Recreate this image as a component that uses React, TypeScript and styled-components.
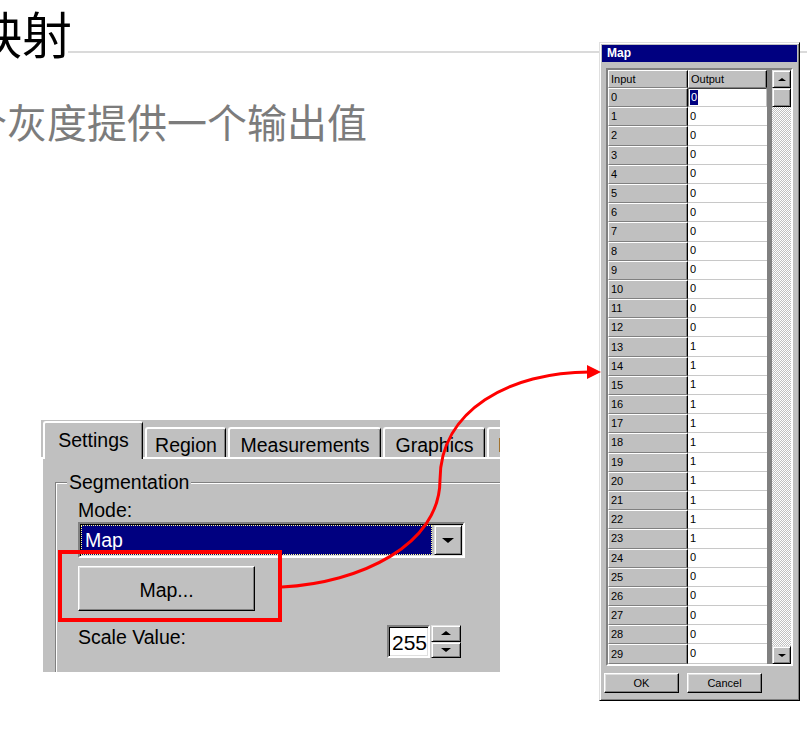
import React from "react";
import styled, { createGlobalStyle } from "styled-components";

const GlobalStyle = createGlobalStyle`
  html, body { margin: 0; padding: 0; background: #fff; }
  body { font-family: "Liberation Sans", Arial, sans-serif; }
  * { box-sizing: border-box; }
`;

const Page = styled.div`
  position: relative;
  width: 807px;
  height: 729px;
  overflow: hidden;
  background: #fff;
  display: grid;
  grid-template-columns: 599px 202px 1fr;
  grid-template-rows: auto auto 1fr;
`;

const Heading = styled.header`
  grid-column: 1 / -1;
  grid-row: 1;
  display: flex;
  align-items: flex-start;
  height: 64px;
`;

const Title = styled.h1`
  margin: 7px 0 0 -28px;
  font: 400 50px/50px "Noto Sans CJK SC", sans-serif;
  color: #000;
  white-space: nowrap;
`;

const Rule = styled.div`
  flex: 1;
  height: 2px;
  margin: 51px 0 0 -4px;
  background: #dadada;
`;

const Subtitle = styled.p`
  grid-column: 1;
  grid-row: 2;
  margin: 37px 0 0 -33px;
  font: 400 40px/40px "Noto Sans CJK SC", sans-serif;
  color: #7c7c7c;
  white-space: nowrap;
`;

/* ---------- left property panel ---------- */

const Panel = styled.section`
  grid-column: 1;
  grid-row: 3;
  align-self: start;
  margin: 279px 0 0 41px;
  width: 459px;
  height: 252px;
  background: #c0c0c0;
  overflow: hidden;
  display: flex;
  flex-direction: column;
  font: 19.5px/20px "Liberation Sans", Arial, sans-serif;
  color: #000;
`;

const TabStrip = styled.div`
  flex: none;
  display: flex;
  align-items: flex-end;
  gap: 2px;
  height: 37px;
  padding-left: 2px;
`;

const Tab = styled.div<{ $w: number; $selected?: boolean }>`
  flex: none;
  position: relative;
  z-index: ${(p) => (p.$selected ? 1 : 0)};
  width: ${(p) => p.$w}px;
  height: ${(p) => (p.$selected ? 38 : 30)}px;
  margin-bottom: ${(p) => (p.$selected ? -2 : 0)}px;
  padding-top: ${(p) => (p.$selected ? 7 : 6)}px;
  background: #c0c0c0;
  border-top: 2px solid #fff;
  border-left: 2px solid #fff;
  border-right: 1px solid #000;
  box-shadow: inset -1px 0 0 #808080;
  border-radius: 3px 3px 0 0;
  text-align: center;
  white-space: nowrap;
  overflow: hidden;
`;

const TabBody = styled.div`
  flex: 1;
  border-top: 2px solid #fff;
  border-left: 2px solid #fff;
  padding: 23px 0 0 12px;
`;

const GroupBox = styled.div`
  width: 600px;
  height: 300px;
  border-top: 1px solid #808080;
  border-left: 1px solid #808080;
  box-shadow: inset 1px 1px 0 #fff;
  padding-left: 22px;
  display: flex;
  flex-direction: column;
  align-items: flex-start;
`;

const Legend = styled.div`
  margin: -11px 0 0 -11px;
  padding: 0 2px;
  background: #c0c0c0;
`;

const FieldLabel = styled.div<{ $mt: number }>`
  margin-top: ${(p) => p.$mt}px;
`;

const Combo = styled.div`
  margin-top: 2px;
  width: 387px;
  height: 36px;
  border: 2px solid;
  border-color: #808080 #fff #fff #808080;
  box-shadow: inset 1px 1px 0 #000, inset -1px -1px 0 #dfdfdf;
  padding: 1px;
  display: flex;
  gap: 2px;
`;

const ComboField = styled.div`
  flex: 1;
  display: flex;
  align-items: center;
  padding-left: 4px;
  background: #000080;
  color: #fff;
  outline: 1px dotted #ffff90;
  outline-offset: -1px;
`;

const Raised = styled.div`
  background: #c0c0c0;
  border: 1px solid;
  border-color: #dfdfdf #000 #000 #dfdfdf;
  box-shadow: inset 1px 1px 0 #fff, inset -1px -1px 0 #808080;
  display: flex;
  align-items: center;
  justify-content: center;
`;

const DropButton = styled(Raised)`
  width: 28px;
`;

const Arrow = styled.span<{ $up?: boolean; $size: number }>`
  width: 0;
  height: 0;
  border-left: ${(p) => p.$size}px solid transparent;
  border-right: ${(p) => p.$size}px solid transparent;
  ${(p) =>
    p.$up
      ? `border-bottom: ${Math.ceil(p.$size * 0.7)}px solid #000;`
      : `border-top: ${Math.ceil(p.$size * 0.7)}px solid #000;`}
`;

const BigButton = styled.div`
  margin-top: 8px;
  width: 177px;
  height: 45px;
  padding-top: 3px;
  background: #c0c0c0;
  border: 1px solid;
  border-color: #fff #000 #000 #fff;
  box-shadow: inset -1px -1px 0 #808080, inset 1px 1px 0 #dfdfdf;
  display: flex;
  align-items: center;
  justify-content: center;
`;

const ScaleRow = styled.div`
  margin-top: 14px;
  width: 383px;
  display: flex;
  justify-content: space-between;
  align-items: flex-start;
`;

const Spin = styled.div`
  display: flex;
  gap: 1px;
`;

const SpinEdit = styled.div`
  width: 43px;
  height: 33px;
  border: 2px solid;
  border-color: #808080 #fff #fff #808080;
  box-shadow: inset 1px 1px 0 #000, inset -1px -1px 0 #dfdfdf;
  background: #fff;
  padding: 1px 0 0 3px;
  font-size: 21px;
  line-height: 29px;
`;

const SpinButtons = styled.div`
  width: 30px;
  height: 33px;
  display: flex;
  flex-direction: column;
`;

const SpinButton = styled(Raised)`
  flex: 1;
`;

/* ---------- Map dialog ---------- */

const Dialog = styled.div`
  grid-column: 2;
  grid-row: 1 / 4;
  align-self: start;
  position: relative;
  z-index: 1;
  margin-top: 42px;
  width: 201px;
  height: 659px;
  background: #c0c0c0;
  border: 1px solid;
  border-color: #dfdfdf #000 #000 #dfdfdf;
  box-shadow: inset 1px 1px 0 #fff, inset -1px -1px 0 #808080;
  padding: 2px;
  display: flex;
  flex-direction: column;
  font: 11px/13px "Liberation Sans", Arial, sans-serif;
  color: #000;
`;

const TitleBar = styled.div`
  height: 17px;
  background: #000080;
  color: #fff;
  font: 700 12px/17px "Liberation Sans", Arial, sans-serif;
  padding-left: 5px;
`;

const GridBox = styled.div`
  margin: 6px 4px 0 4px;
  height: 598px;
  border: 2px solid;
  border-color: #808080 #fff #fff #808080;
  background: #808080;
  display: flex;
`;

const Table = styled.div`
  width: 159px;
  height: 594px;
  overflow: hidden;
  display: grid;
  grid-template-columns: 80px 79px;
  grid-template-rows: 18px;
  grid-auto-rows: 19.2px;
`;

const HeadCell = styled.div`
  background: #c0c0c0;
  border-top: 1px solid #fff;
  border-left: 1px solid #fff;
  border-bottom: 1px solid #808080;
  border-right: 1px solid #000;
  box-shadow: inset -1px 0 0 #808080;
  padding-left: 2px;
  display: flex;
  align-items: center;
  white-space: nowrap;
  overflow: hidden;
`;

const ValueCell = styled.div<{ $editing?: boolean }>`
  background: #fff;
  border-bottom: 1px solid #c8c8c8;
  padding-left: 2px;
  display: flex;
  align-items: center;
  ${(p) =>
    p.$editing
      ? `border-top: 1px solid #404040; border-left: 1px solid #808080; border-right: 1px solid #c0c0c0; padding-left: 1px;`
      : ``}
`;

const Selected = styled.span`
  background: #000080;
  color: #fff;
  padding: 1px 1px;
`;

const ScrollBar = styled.div`
  margin-left: 5px;
  width: 19px;
  display: flex;
  flex-direction: column;
  background: repeating-conic-gradient(#c0c0c0 0% 25%, #ffffff 0% 50%) 0 0 / 2px 2px;
`;

const ScrollButton = styled(Raised)`
  height: 18px;
  flex: none;
`;

const Thumb = styled(Raised)`
  height: 19px;
  flex: none;
`;

const Track = styled.div`
  flex: 1;
`;

const ButtonRow = styled.div`
  display: flex;
  gap: 8px;
  margin: 7px 0 0 2px;
`;

const DialogButton = styled.button`
  width: 75px;
  height: 20px;
  padding: 0;
  font: inherit;
  color: #000;
  background: #c0c0c0;
  border: 1px solid;
  border-color: #fff #000 #000 #fff;
  box-shadow: inset -1px -1px 0 #808080, inset 1px 1px 0 #dfdfdf;
`;

const Overlay = styled.svg`
  position: absolute;
  left: 0;
  top: 0;
  width: 807px;
  height: 729px;
  pointer-events: none;
  z-index: 5;
`;

const outputs = Array.from({ length: 30 }, (_, i) => (i >= 13 && i <= 23 ? 1 : 0));

export default function App() {
  return (
    <>
      <GlobalStyle />
      <Page>
        <Heading>
          <Title>映射</Title>
          <Rule />
        </Heading>
        <Subtitle>个灰度提供一个输出值</Subtitle>

        <Panel>
          <TabStrip>
            <Tab $w={100} $selected>
              Settings
            </Tab>
            <Tab $w={81}>Region</Tab>
            <Tab $w={153}>Measurements</Tab>
            <Tab $w={102}>Graphics</Tab>
            <Tab $w={60}>Blob</Tab>
          </TabStrip>
          <TabBody>
            <GroupBox>
              <Legend>Segmentation</Legend>
              <FieldLabel $mt={8}>Mode:</FieldLabel>
              <Combo>
                <ComboField>Map</ComboField>
                <DropButton>
                  <Arrow $size={6} />
                </DropButton>
              </Combo>
              <BigButton>Map...</BigButton>
              <ScaleRow>
                <FieldLabel $mt={2}>Scale Value:</FieldLabel>
                <Spin>
                  <SpinEdit>255</SpinEdit>
                  <SpinButtons>
                    <SpinButton>
                      <Arrow $up $size={5} />
                    </SpinButton>
                    <SpinButton>
                      <Arrow $size={5} />
                    </SpinButton>
                  </SpinButtons>
                </Spin>
              </ScaleRow>
            </GroupBox>
          </TabBody>
        </Panel>

        <Dialog>
          <TitleBar>Map</TitleBar>
          <GridBox>
            <Table>
              <HeadCell>Input</HeadCell>
              <HeadCell>Output</HeadCell>
              {outputs.map((v, i) => (
                <React.Fragment key={i}>
                  <HeadCell>{i}</HeadCell>
                  {i === 0 ? (
                    <ValueCell $editing>
                      <Selected>{v}</Selected>
                    </ValueCell>
                  ) : (
                    <ValueCell>{v}</ValueCell>
                  )}
                </React.Fragment>
              ))}
            </Table>
            <ScrollBar>
              <ScrollButton>
                <Arrow $up $size={4} />
              </ScrollButton>
              <Thumb />
              <Track />
              <ScrollButton>
                <Arrow $size={4} />
              </ScrollButton>
            </ScrollBar>
          </GridBox>
          <ButtonRow>
            <DialogButton>OK</DialogButton>
            <DialogButton>Cancel</DialogButton>
          </ButtonRow>
        </Dialog>

        <Overlay viewBox="0 0 807 729">
          <rect x="60" y="552" width="220" height="68" fill="none" stroke="#ff0000" strokeWidth="4" />
          <path
            d="M282 587 C360 583 440 545 440 480 C440 410 510 372 590 372"
            fill="none"
            stroke="#ff0000"
            strokeWidth="3"
          />
          <polygon points="601,372 587,365 587,379" fill="#ff0000" />
        </Overlay>
      </Page>
    </>
  );
}
